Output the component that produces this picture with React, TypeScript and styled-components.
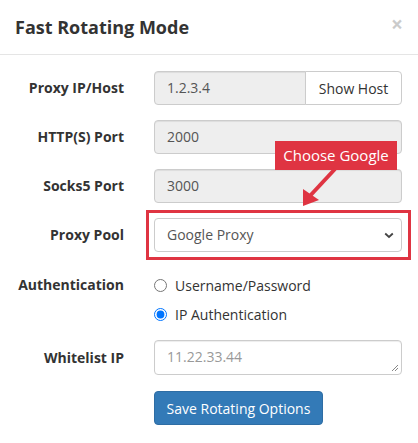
import React from "react";
import styled, { createGlobalStyle } from "styled-components";

const Global = createGlobalStyle`
  html, body { margin: 0; padding: 0; background: #fff; }
  body { font-family: "Open Sans", "Liberation Sans", sans-serif; font-size: 14px; color: #333; }
  * { box-sizing: border-box; }
`;

const Modal = styled.div`
  width: 418px;
  height: 443px;
  background: #fff;
  display: flex;
  flex-direction: column;
`;

const Header = styled.div`
  display: flex;
  align-items: center;
  justify-content: space-between;
  padding: 15px 15px 15px 15px;
  height: 55px;
  border-bottom: 1px solid #e5e5e5;
`;

const Title = styled.h4`
  margin: 0;
  font-size: 18px;
  font-weight: 700;
  color: #333;
  line-height: 25px;
`;

const Close = styled.span`
  font-size: 21px;
  font-weight: 700;
  line-height: 1;
  color: #000;
  opacity: 0.2;
  margin-top: -6px;
  margin-right: 0px;
`;

const Body = styled.div`
  padding: 16px 16px 15px 15px;
  display: grid;
  grid-template-columns: 109px 248px;
  column-gap: 30px;
  row-gap: 15px;
  align-items: center;
`;

const Label = styled.label<{ $top?: boolean }>`
  text-align: right;
  font-weight: 700;
  font-size: 14px;
  line-height: 20px;
  color: #333;
  align-self: ${(p) => (p.$top ? "start" : "center")};
  padding-top: ${(p) => (p.$top ? "8px" : "0")};
`;

const Field = styled.div`
  height: 34px;
  border: 1px solid #ccc;
  border-radius: 4px;
  background: ${(p: { $readonly?: boolean }) => (p.$readonly ? "#eee" : "#fff")};
  color: #555;
  font-size: 14px;
  line-height: 20px;
  padding: 6px 12px;
  box-shadow: inset 0 1px 1px rgba(0, 0, 0, 0.075);
`;

const Group = styled.div`
  display: flex;
  height: 34px;
`;

const GroupField = styled(Field)`
  flex: 1;
  border-top-right-radius: 0;
  border-bottom-right-radius: 0;
`;

const AddonButton = styled.button`
  height: 34px;
  width: 97px;
  margin-left: -1px;
  border: 1px solid #ccc;
  border-radius: 0 4px 4px 0;
  background: #fff;
  color: #333;
  font-family: "Open Sans", "Liberation Sans", sans-serif;
  font-size: 14px;
  padding: 0;
`;

const SelectWrap = styled.div`
  position: relative;
`;

const Select = styled(Field)`
  display: flex;
  align-items: center;
  justify-content: space-between;
  padding-right: 7px;
  box-shadow: none;
`;

const Highlight = styled.div`
  position: absolute;
  left: -8px;
  right: -9px;
  top: -8px;
  bottom: -8px;
  border: 3.5px solid #df3442;
  pointer-events: none;
`;

const Callout = styled.div`
  position: absolute;
  left: 121px;
  top: -77px;
  width: 122px;
  height: 29px;
  background: #df3442;
  color: #fff;
  font-size: 15px;
  line-height: 29px;
  text-align: center;
`;

const Arrow = styled.svg`
  position: absolute;
  left: 140px;
  top: -50px;
  overflow: visible;
`;

const RadioGroup = styled.div`
  display: flex;
  flex-direction: column;
  gap: 9px;
  padding-top: 8px;
  padding-bottom: 1px;
`;

const RadioLabel = styled.label`
  display: flex;
  align-items: center;
  height: 20px;
  font-size: 14px;
  color: #333;
  gap: 8px;
`;

const Radio = styled.input`
  margin: 0;
  width: 13px;
  height: 13px;
`;

const TextArea = styled(Field)`
  height: 35px;
  color: #999;
  position: relative;
`;

const Grip = styled.svg`
  position: absolute;
  right: 2px;
  bottom: 2px;
`;

const PrimaryButton = styled.button`
  grid-column: 2;
  justify-self: start;
  height: 34px;
  width: 169px;
  margin-top: 1px;
  background: #337ab7;
  border: 1px solid #2e6da4;
  border-radius: 4px;
  color: #fff;
  font-family: "Open Sans", "Liberation Sans", sans-serif;
  font-size: 14px;
  padding: 0;
`;

export default function App() {
  return (
    <>
      <Global />
      <Modal>
        <Header>
          <Title>Fast Rotating Mode</Title>
          <Close>×</Close>
        </Header>
        <Body>
          <Label>Proxy IP/Host</Label>
          <Group>
            <GroupField $readonly>1.2.3.4</GroupField>
            <AddonButton>Show Host</AddonButton>
          </Group>

          <Label>HTTP(S) Port</Label>
          <Field $readonly>2000</Field>

          <Label>Socks5 Port</Label>
          <Field $readonly>3000</Field>

          <Label>Proxy Pool</Label>
          <SelectWrap>
            <Select>
              <span>Google Proxy</span>
              <svg width="10" height="7" viewBox="0 0 10 7">
                <path d="M1.2 1.5 L5 5 L8.8 1.5" fill="none" stroke="#444" strokeWidth="1.8" />
              </svg>
            </Select>
            <Highlight />
            <Callout>Choose Google</Callout>
            <Arrow width="40" height="40" viewBox="0 0 40 40">
              <line x1="41" y1="1" x2="14" y2="30" stroke="#df3442" strokeWidth="4" />
              <polygon points="9,38 9,21 25,32" fill="#df3442" />
            </Arrow>
          </SelectWrap>

          <Label $top>Authentication</Label>
          <RadioGroup>
            <RadioLabel>
              <Radio type="radio" name="auth" />
              Username/Password
            </RadioLabel>
            <RadioLabel>
              <Radio type="radio" name="auth" defaultChecked />
              IP Authentication
            </RadioLabel>
          </RadioGroup>

          <Label>Whitelist IP</Label>
          <TextArea>
            11.22.33.44
            <Grip width="8" height="8" viewBox="0 0 8 8">
              <path d="M1 7 L7 1 M4 7 L7 4" stroke="#888" strokeWidth="1" />
            </Grip>
          </TextArea>

          <PrimaryButton>Save Rotating Options</PrimaryButton>
        </Body>
      </Modal>
    </>
  );
}
